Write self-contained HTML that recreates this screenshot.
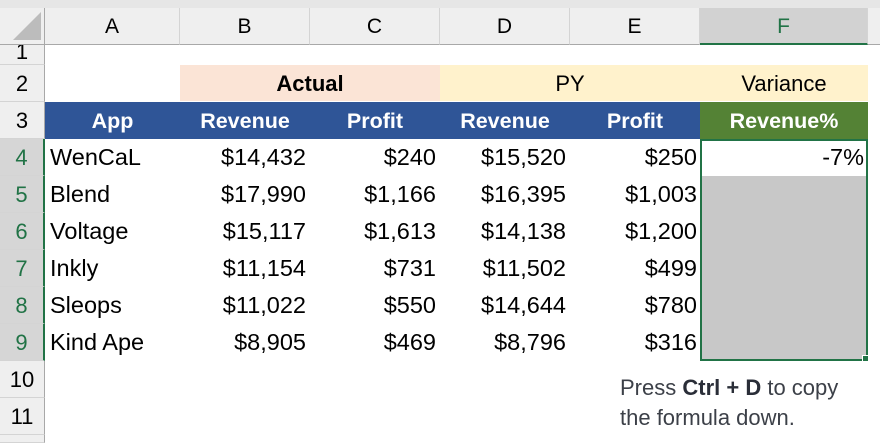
<!DOCTYPE html>
<html><head><style>
body{margin:0;width:880px;height:443px;overflow:hidden;background:#fff;font-family:"Liberation Sans",sans-serif;position:relative}
div{position:absolute;box-sizing:border-box}
.ch{top:8px;height:37px;background:#efefef;border-right:1px solid #d4d4d4;border-bottom:1px solid #a8a8a8;font-size:21px;text-align:center;line-height:37px;color:#000}
.rh{left:0;width:45px;background:#efefef;border-right:1px solid #a8a8a8;border-bottom:1px solid #d4d4d4;font-size:22px;text-align:center;color:#000}
.sel{background:#d6d6d6;color:#217346;border-right:2px solid #217346}
.c{font-size:23.5px;line-height:37px;height:37px;white-space:nowrap}
.r{text-align:right}
.h{color:#fff;font-weight:bold;font-size:21.5px;text-align:center;line-height:39px;height:37px;top:102px}
</style></head><body>
<div style="left:0;top:0;width:880px;height:8px;background:#e6e6e6"></div>
<div style="left:0;top:8px;width:45px;height:37px;background:#efefef;border-right:1px solid #a8a8a8;border-bottom:1px solid #a8a8a8"></div>
<div style="left:13px;top:12px;width:0;height:0;border-left:28px solid transparent;border-bottom:28px solid #bcbcbc"></div>
<div class="ch" style="left:45px;width:135px">A</div>
<div class="ch" style="left:180px;width:130px">B</div>
<div class="ch" style="left:310px;width:130px">C</div>
<div class="ch" style="left:440px;width:130px">D</div>
<div class="ch" style="left:570px;width:130px">E</div>
<div class="ch" style="left:700px;width:168px;background:#d2d2d2;color:#217346;border-bottom:2px solid #217346">F</div>
<div style="left:868px;top:8px;width:12px;height:37px;background:#efefef;border-bottom:1px solid #a8a8a8"></div>

<div class="rh" style="top:45px;height:20px;line-height:14px;overflow:hidden">1</div>
<div class="rh" style="top:65px;height:37px;line-height:37px">2</div>
<div class="rh" style="top:102px;height:37px;line-height:37px">3</div>
<div class="rh sel" style="top:139px;height:37px;line-height:37px">4</div>
<div class="rh sel" style="top:176px;height:37px;line-height:37px">5</div>
<div class="rh sel" style="top:213px;height:37px;line-height:37px">6</div>
<div class="rh sel" style="top:250px;height:37px;line-height:37px">7</div>
<div class="rh sel" style="top:287px;height:37px;line-height:37px">8</div>
<div class="rh sel" style="top:324px;height:37px;line-height:37px">9</div>
<div class="rh" style="top:361px;height:37px;line-height:37px">10</div>
<div class="rh" style="top:398px;height:37px;line-height:37px">11</div>
<div class="rh" style="top:435px;height:8px"></div>

<div style="left:180px;top:65px;width:260px;height:36px;background:#fbe4d6;font-weight:bold;font-size:22px;text-align:center;line-height:38px">Actual</div>
<div style="left:440px;top:65px;width:428px;height:36px;background:#fff2cc"></div>
<div style="left:440px;top:65px;width:260px;font-size:22px;text-align:center;line-height:38px">PY</div>
<div style="left:700px;top:65px;width:168px;font-size:22px;text-align:center;line-height:38px">Variance</div>

<div style="left:45px;top:102px;width:655px;height:37px;background:#2f5597"></div>
<div style="left:700px;top:102px;width:168px;height:37px;background:#548235"></div>
<div class="h" style="left:45px;width:135px">App</div>
<div class="h" style="left:180px;width:130px">Revenue</div>
<div class="h" style="left:310px;width:130px">Profit</div>
<div class="h" style="left:440px;width:130px">Revenue</div>
<div class="h" style="left:570px;width:130px">Profit</div>
<div class="h" style="left:700px;width:168px">Revenue%</div>

<div style="left:700px;top:176px;width:168px;height:185px;background:#c8c8c8"></div>
<div style="left:700px;top:139px;width:168px;height:222px;border:2px solid #217346"></div>
<div style="left:862px;top:355px;width:7px;height:7px;background:#217346;border:1px solid #fff"></div>
<div class="c r" style="left:700px;top:139px;width:164px">-7%</div>

<div class="c" style="left:50px;top:139px">WenCaL</div>
<div class="c" style="left:50px;top:176px">Blend</div>
<div class="c" style="left:50px;top:213px">Voltage</div>
<div class="c" style="left:50px;top:250px">Inkly</div>
<div class="c" style="left:50px;top:287px">Sleops</div>
<div class="c" style="left:50px;top:324px">Kind Ape</div>

<div class="c r" style="left:180px;top:139px;width:126px">$14,432</div>
<div class="c r" style="left:180px;top:176px;width:126px">$17,990</div>
<div class="c r" style="left:180px;top:213px;width:126px">$15,117</div>
<div class="c r" style="left:180px;top:250px;width:126px">$11,154</div>
<div class="c r" style="left:180px;top:287px;width:126px">$11,022</div>
<div class="c r" style="left:180px;top:324px;width:126px">$8,905</div>

<div class="c r" style="left:310px;top:139px;width:126px">$240</div>
<div class="c r" style="left:310px;top:176px;width:126px">$1,166</div>
<div class="c r" style="left:310px;top:213px;width:126px">$1,613</div>
<div class="c r" style="left:310px;top:250px;width:126px">$731</div>
<div class="c r" style="left:310px;top:287px;width:126px">$550</div>
<div class="c r" style="left:310px;top:324px;width:126px">$469</div>

<div class="c r" style="left:440px;top:139px;width:126px">$15,520</div>
<div class="c r" style="left:440px;top:176px;width:126px">$16,395</div>
<div class="c r" style="left:440px;top:213px;width:126px">$14,138</div>
<div class="c r" style="left:440px;top:250px;width:126px">$11,502</div>
<div class="c r" style="left:440px;top:287px;width:126px">$14,644</div>
<div class="c r" style="left:440px;top:324px;width:126px">$8,796</div>

<div class="c r" style="left:570px;top:139px;width:127px">$250</div>
<div class="c r" style="left:570px;top:176px;width:127px">$1,003</div>
<div class="c r" style="left:570px;top:213px;width:127px">$1,200</div>
<div class="c r" style="left:570px;top:250px;width:127px">$499</div>
<div class="c r" style="left:570px;top:287px;width:127px">$780</div>
<div class="c r" style="left:570px;top:324px;width:127px">$316</div>

<div style="left:620px;top:373px;width:260px;font-size:22px;line-height:30px;color:#3c4048">Press <b style="color:#2a2e38">Ctrl + D</b> to copy<br>the formula down.</div>
</body></html>
